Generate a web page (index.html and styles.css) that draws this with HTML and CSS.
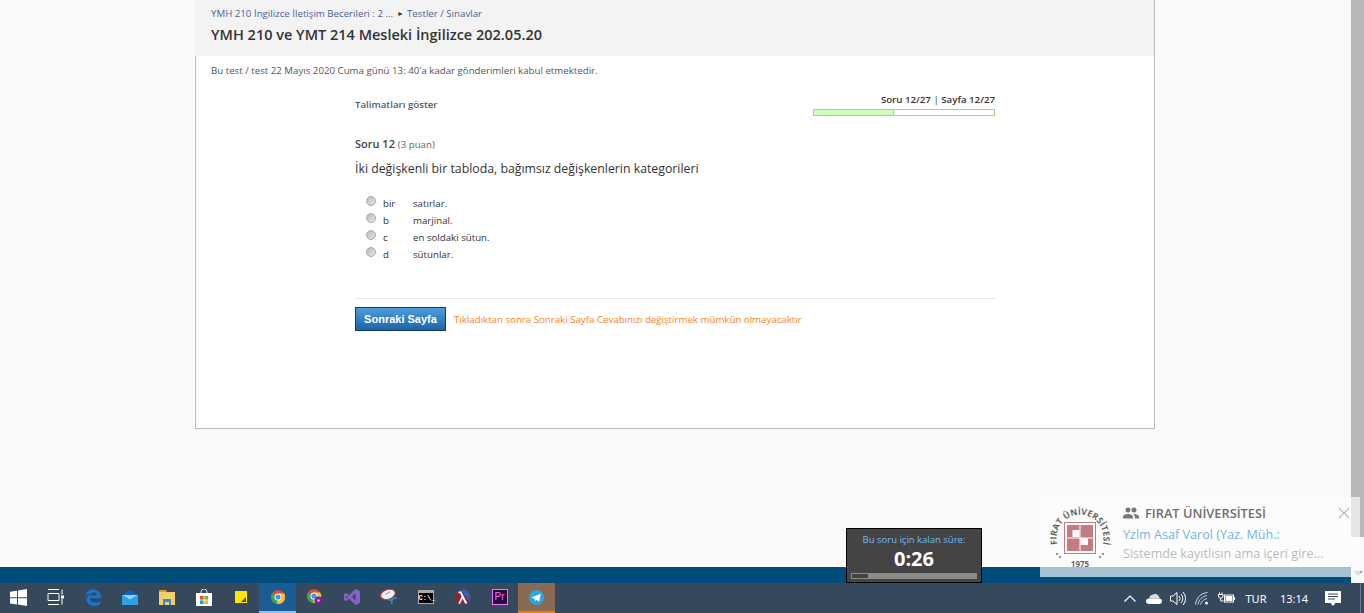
FILE: index.html
```html
<!DOCTYPE html>
<html lang="tr">
<head>
    <meta charset="UTF-8">
    <title>YMH 210 ve YMT 214 Mesleki İngilizce 202.05.20</title>
    <link rel="stylesheet" href="styles.css">
</head>
<body>
    <div class="browser">
        <div class="viewport">
            <div class="page">
                <div class="card">
                    <div class="card-head">
                        <div class="crumbs"><a href="#">YMH 210 İngilizce İletişim Becerileri : 2 ...</a><span class="crumb-sep">&#9658;</span><a href="#">Testler / Sınavlar</a></div>
                        <h1>YMH 210 ve YMT 214 Mesleki İngilizce 202.05.20</h1>
                    </div>
                    <div class="card-body">
                        <p class="deadline">Bu test / test 22 Mayıs 2020 Cuma günü 13: 40'a kadar gönderimleri kabul etmektedir.</p>
                        <div class="quiz">
                            <div class="quiz-top">
                                <a class="show-help" href="#">Talimatları göster</a>
                                <div class="progress-box">
                                    <div class="progress-text">Soru 12/27 <span class="pipe">|</span> Sayfa 12/27</div>
                                    <div class="progress-bar"><div class="progress-fill" style="width: 44.5%"></div></div>
                                </div>
                            </div>
                            <div class="q-title">Soru 12 <span class="q-points">(3 puan)</span></div>
                            <p class="q-text">İki değişkenli bir tabloda, bağımsız değişkenlerin kategorileri</p>
                            <ul class="options">
                                <li><span class="radio"></span><span class="opt-key">bir</span><span>satırlar.</span></li>
                                <li><span class="radio"></span><span class="opt-key">b</span><span>marjinal.</span></li>
                                <li><span class="radio"></span><span class="opt-key">c</span><span>en soldaki sütun.</span></li>
                                <li><span class="radio"></span><span class="opt-key">d</span><span>sütunlar.</span></li>
                            </ul>
                            <div class="quiz-actions">
                                <button class="next-btn">Sonraki Sayfa</button>
                                <span class="next-note">Tıkladıktan sonra Sonraki Sayfa Cevabınızı değiştirmek mümkün olmayacaktır</span>
                            </div>
                        </div>
                    </div>
                </div>
            </div>
            <div class="footer-band"></div>
        </div>
        <div class="scrollbar">
            <div class="scroll-thumb"></div>
            <div class="scroll-track"><span class="scroll-arrow"></span></div>
        </div>
    </div>

    <div class="timer">
        <div class="timer-label">Bu soru için kalan süre:</div>
        <div class="timer-value">0:26</div>
        <div class="timer-bar"><div class="timer-fill" style="width: 13%"></div></div>
    </div>

    <div class="toast">
        <svg class="toast-logo" width="70" height="72" viewBox="0 0 70 72">
            <defs>
                <path id="logoArc" d="M10.500 43 A23.500 23.500 0 1 1 55.500 43"/>
            </defs>
            <text class="logo-ring"><textPath href="#logoArc" startOffset="50%" text-anchor="middle">FIRAT ÜNİVERSİTESİ</textPath></text>
            <text class="logo-year" x="33" y="65" text-anchor="middle">1975</text>
            <circle cx="10" cy="52" r="1" fill="#222"/>
            <circle cx="13" cy="55" r="1" fill="#222"/>
            <circle cx="56" cy="52" r="1" fill="#222"/>
            <circle cx="53" cy="55" r="1" fill="#222"/>
            <rect x="17.500" y="20.500" width="31" height="31" fill="#fff" stroke="#a83a46"/>
            <rect x="20" y="23" width="26" height="26" fill="#a83a46"/>
            <path d="M33 23v26M20 36h26" stroke="#fff"/>
            <rect x="25.500" y="28" width="7" height="7" fill="#fff"/>
            <rect x="33.500" y="36" width="7.500" height="7" fill="#fff"/>
        </svg>
        <div class="toast-main">
            <div class="toast-site">
                <svg width="16" height="12" viewBox="0 0 16 12"><path d="M5 5.500a2.400 2.400 0 1 0 0-5 2.400 2.400 0 0 0 0 5zm6 0a2.400 2.400 0 1 0 0-5 2.400 2.400 0 0 0 0 5zM5 7c-2 0-5 1-5 2.800V11.500h10V9.800C10 8 7 7 5 7zm6 0c-.3 0-.6 0-.9.1 1 .7 1.700 1.600 1.700 2.700v1.700H16V9.800C16 8 13 7 11 7z" fill="#333"/></svg>
                <span>FIRAT ÜNİVERSİTESİ</span>
            </div>
            <div class="toast-from">Yzlm Asaf Varol (Yaz. Müh.:</div>
            <div class="toast-msg">Sistemde kayıtlısın ama içeri gire...</div>
        </div>
        <svg class="toast-close" width="12" height="12" viewBox="0 0 12 12"><path d="M1 1l10 10M11 1L1 11" stroke="#999" stroke-width="1.200"/></svg>
    </div>

    <div class="taskbar">
        <div class="task-icons">
            <div class="task-item">
                <svg width="17" height="17" viewBox="0 0 17 17"><path d="M0 2.700l7-1v6.500H0zM8 1.500L17 0v8.200H8zM0 9.200h7v6.200l-7-1zM8 9.200h9V17l-9-1.400z" fill="#fff"/></svg>
            </div>
            <div class="task-item">
                <svg width="17" height="16" viewBox="0 0 17 16" fill="none" stroke="#fff"><path d="M1 .5h11M3 4.500h9v7H1v-7zM1 15.500h11M15 .5v5M15 10v5.500"/><rect x="14" y="6.500" width="3" height="3" fill="#fff" stroke="none"/></svg>
            </div>
            <div class="task-item">
                <svg width="17" height="17" viewBox="0 0 17 17"><path d="M1 7.500C2 2.800 5.500.3 9 .3c4.800 0 8 3.500 8 9H6c.1 2.800 2.300 4.300 5 4.300 2 0 3.800-.6 5-1.300v3.300c-1.400.9-3.400 1.400-5.700 1.400C5.500 17 2.500 14 2.500 10.500c0-2.800 1.800-4.800 3.800-5.700C4 5 2 6 1 7.500zm5.200-1h6.600c0-1.800-1.300-3-3.100-3-1.800 0-3.200 1.200-3.500 3z" fill="#0f78d4"/></svg>
            </div>
            <div class="task-item">
                <svg width="16" height="15" viewBox="0 0 16 15"><path d="M8 0l8 5H0z" fill="#0a64b4"/><path d="M0 5h16L8 10z" fill="#8fd0f5"/><path d="M0 5v10h16V5L8 10z" fill="#27a3e6"/></svg>
            </div>
            <div class="task-item">
                <svg width="16" height="15" viewBox="0 0 16 15"><path d="M0 0h7l1 2H0z" fill="#d99a1c"/><path d="M0 2h16v13H0z" fill="#f5cf6b"/><path d="M4 9h8v6h-2v-3H6v3H4z" fill="#2b8fd6"/></svg>
            </div>
            <div class="task-item">
                <svg width="16" height="17" viewBox="0 0 16 17"><path d="M5 5V3a3 3 0 0 1 6 0v2" fill="none" stroke="#ddd"/><path d="M0 4h16v13H0z" fill="#fff"/><path d="M4 7h3.600v3.600H4z" fill="#e2502a"/><path d="M8.400 7H12v3.600H8.400z" fill="#7cb82f"/><path d="M4 11.400h3.600V15H4z" fill="#0aa1e6"/><path d="M8.400 11.400H12V15H8.400z" fill="#f5b800"/></svg>
            </div>
            <div class="task-item">
                <svg width="12" height="12" viewBox="0 0 12 12"><path d="M0 0h12v12H0z" fill="#ffe600"/><path d="M6 11l5-5v5z" fill="#4a4a3a"/></svg>
            </div>
            <div class="task-item is-active">
                <svg width="14" height="14" viewBox="0 0 14 14"><circle cx="7" cy="7" r="7" fill="#dd4b39"/><path d="M7 7L1 3.500A7 7 0 0 0 6 14z" fill="#3aa757"/><path d="M7 3.500h6.200A7 7 0 0 1 6 14z" fill="#fbc02d"/><circle cx="7" cy="7" r="3.500" fill="#fff"/><circle cx="7" cy="7" r="2.600" fill="#4b8ff0"/></svg>
            </div>
            <div class="task-item">
                <svg width="16" height="16" viewBox="0 0 16 16"><circle cx="7" cy="7" r="7" fill="#dd4b39"/><path d="M7 7L1 3.500A7 7 0 0 0 6 14z" fill="#3aa757"/><path d="M7 3.500h6.200A7 7 0 0 1 6 14z" fill="#fbc02d"/><circle cx="7" cy="7" r="3.500" fill="#fff"/><circle cx="7" cy="7" r="2.600" fill="#4b8ff0"/><circle cx="11.500" cy="11.500" r="4" fill="#7b1fa2"/><circle cx="11.500" cy="11.500" r="1.200" fill="#e1bee7"/></svg>
            </div>
            <div class="task-item">
                <svg width="16" height="16" viewBox="0 0 16 16"><path d="M11.500 0L16 2v12l-4.500 2L5 9.800 2 12.200 0 11V5l2-1.200 3 2.400zM11.500 4.500L8 8l3.500 3.500zM2 6.300v3.400L3.600 8z" fill="#8661c5"/></svg>
            </div>
            <div class="task-item">
                <svg width="18" height="16" viewBox="0 0 16 15"><ellipse cx="7" cy="5" rx="7" ry="4.500" transform="rotate(-18 7 5)" fill="#eee" stroke="#c8383c"/><path d="M5 5l4-2.500" stroke="#999"/><path d="M7 9.500c2 1.500 4 1 5-.3 1-1 3-1 3.500-.3" fill="none" stroke="#2b8fd6" stroke-width="1.300"/><path d="M11 9l-.5 5" stroke="#2b8fd6" stroke-width="1.300"/></svg>
            </div>
            <div class="task-item">
                <div class="cmd-icon"><span>C:\_</span></div>
            </div>
            <div class="task-item">
                <svg width="16" height="16" viewBox="0 0 16 16"><circle cx="8" cy="8" r="7.500" fill="#3c5caa"/><path d="M.5 8a7.500 7.500 0 0 0 4 6.600L8 8 5 2A7.500 7.500 0 0 0 .5 8zM6 15.200A7.500 7.500 0 0 0 14 12.500L9.500 7z" fill="#9f1d20"/><path d="M3.500 2.500h2.600L12.500 14.500h-2.400L7.600 9.400 4.600 15 3.400 14.200 6.600 7.400 5 4.300H3.500z" fill="#fff"/></svg>
            </div>
            <div class="task-item">
                <div class="pr-icon">Pr</div>
            </div>
            <div class="task-item is-flagged">
                <svg width="15" height="15" viewBox="0 0 15 15"><circle cx="7.500" cy="7.500" r="7.500" fill="#2ca5e0"/><path d="M3 7.300l8-3.200c.4-.1.700.1.600.6L10.300 11c-.1.400-.4.500-.8.300L7.500 9.800l-1 1c-.2.200-.4.200-.5-.1l-.7-2.300L3 7.800c-.4-.1-.4-.4 0-.5z" fill="#fff"/></svg>
            </div>
        </div>
        <div class="tray">
            <div class="tray-item">
                <svg width="12" height="7" viewBox="0 0 12 7"><path d="M.5 6.500L6 1l5.500 5.500" fill="none" stroke="#fff" stroke-width="1.100"/></svg>
            </div>
            <div class="tray-item">
                <svg width="16" height="11" viewBox="0 0 16 11"><path d="M3.500 5.500A3 3 0 0 1 6 2a4.500 4.500 0 0 1 7 1.500 3 3 0 0 1 .5 2z" fill="#d8dde2"/><path d="M3.500 5.500h10a2.800 2.800 0 0 1 2.500 2.800c0 1.500-1.200 2.700-2.700 2.700H3a3 3 0 0 1-3-2.800 2.800 2.800 0 0 1 3.500-2.700z" fill="#fff"/></svg>
            </div>
            <div class="tray-item">
                <svg width="16" height="15" viewBox="0 0 16 15" fill="none" stroke="#fff"><path d="M.5 5v5h2.500l4 3.500V1.500L3 5z"/><path d="M9 5a3.500 3.500 0 0 1 0 5M11 3a6.500 6.500 0 0 1 0 9M13 1a9.500 9.500 0 0 1 0 13"/></svg>
            </div>
            <div class="tray-item">
                <svg width="14" height="13" viewBox="0 0 14 13" fill="none" stroke="#cfd6dc"><path d="M.5 12.500C1 6 6 1 12.500.5M3 12.500C3.500 8 7.500 4 12 3.500M5.500 12.500C6 10 9 7 12 6.500"/><circle cx="11.500" cy="11" r="1.500" fill="#fff" stroke="none"/></svg>
            </div>
            <div class="tray-item">
                <svg width="17" height="12" viewBox="0 0 17 12" fill="none" stroke="#fff"><path d="M1.500 .5v2M4 .5v2M.5 2.500h4.500V4a2.200 2.200 0 0 1-4.500 0zM2.700 6.200v2.800h3"/><rect x="6.500" y="3" width="9" height="7"/><rect x="7.500" y="4" width="7" height="5" fill="#fff" stroke="none"/><path d="M16.500 5v3"/></svg>
            </div>
            <div class="tray-text tray-lang">TUR</div>
            <div class="tray-text tray-clock">13:14</div>
            <div class="tray-item tray-notif">
                <svg width="16" height="15" viewBox="0 0 16 15"><path d="M0 0h16v12h-5.500L8 15l-2.500-3H0z" fill="#fff"/><path d="M3 3h10M3 5.500h10M3 8h7" stroke="#36495c"/></svg>
            </div>
            <div class="show-desktop"></div>
        </div>
    </div>
</body>
</html>
```

FILE: styles.css
```css
* {
    box-sizing: border-box;
}

html, body {
    margin: 0;
    padding: 0;
    height: 100%;
    overflow: hidden;
}

body {
    display: flex;
    flex-direction: column;
    background-color: #faf9f7;
    font-family: 'Open Sans', sans-serif;
    color: #333;
    position: relative;
}

a {
    text-decoration: none;
}

.browser {
    display: flex;
    height: 583px;
}

.viewport {
    flex: 1;
    display: flex;
    flex-direction: column;
}

.page {
    flex: 1;
    padding-left: 195px;
}

.card {
    width: 960px;
    height: 429px;
    display: flex;
    flex-direction: column;
    background-color: #fff;
    border-right: 1px solid #bdbdbd;
    border-bottom: 1px solid #bdbdbd;
}

.card-head {
    height: 56px;
    padding: 7px 16px 0;
    background-color: #f3f3f3;
}

.crumbs {
    font-size: 9.700px;
    line-height: 13px;
    color: #555;
}

.crumbs a {
    color: #4f5f96;
}

.crumb-sep {
    font-size: 7px;
    margin: 0 3px 0 4px;
    color: #333;
    vertical-align: 1px;
}

h1 {
    margin: 5px 0 0;
    font-size: 14.500px;
    line-height: 20px;
    font-weight: 600;
    color: #333;
}

.card-body {
    flex: 1;
    padding: 8px 16px 0 15px;
    border-left: 1px solid #bdbdbd;
}

.deadline {
    margin: 0;
    font-size: 9.700px;
    line-height: 14px;
    color: #555;
}

.quiz {
    width: 640px;
    margin: 14px 0 0 144px;
}

.quiz-top {
    display: flex;
    justify-content: space-between;
    align-items: flex-start;
    height: 38px;
}

.show-help {
    margin-top: 6px;
    font-size: 9.700px;
    line-height: 14px;
    font-weight: 600;
    color: #4d5d70;
}

.progress-box {
    width: 182px;
    padding-top: 1px;
}

.progress-text {
    font-size: 9.700px;
    line-height: 14px;
    font-weight: 600;
    text-align: right;
    color: #333;
}

.pipe {
    color: #4f6f96;
}

.progress-bar {
    height: 7px;
    margin-top: 2px;
    border: 1px solid #99dd80;
    background-color: #fff;
}

.progress-fill {
    height: 100%;
    background-color: #ccffbb;
    border-right: 1px solid #99dd80;
}

.q-title {
    margin-top: 6px;
    font-size: 11px;
    line-height: 15px;
    font-weight: 600;
    color: #444;
}

.q-points {
    font-size: 9.700px;
    font-weight: 400;
    color: #666;
}

.q-text {
    margin: 8px 0 0;
    font-size: 12.300px;
    line-height: 17px;
    color: #333;
}

.options {
    list-style: none;
    margin: 18px 0 0;
    padding: 0 0 0 11px;
}

.options li {
    display: flex;
    align-items: center;
    height: 17px;
    font-size: 9.700px;
    color: #333;
}

.radio {
    width: 10px;
    height: 10px;
    margin: -5px 7px 0 0;
    border-radius: 50%;
    border: 1px solid #a9a9a9;
    background: linear-gradient(135deg, #bbb, #e6e6e6);
}

.opt-key {
    width: 30px;
}

.quiz-actions {
    display: flex;
    align-items: center;
    gap: 8px;
    margin-top: 35px;
    padding-top: 8px;
    border-top: 1px solid #e6e6e6;
}

.next-btn {
    width: 91px;
    height: 24px;
    padding: 0;
    border: 1px solid #123c64;
    background: linear-gradient(#4f9ddd, #1f63a6);
    color: #fff;
    font-family: 'Liberation Sans', sans-serif;
    font-size: 11px;
    font-weight: bold;
}

.next-note {
    font-size: 9.700px;
    color: #f5842a;
}

.footer-band {
    height: 16px;
    background-color: #004d7c;
}

.scrollbar {
    width: 13px;
    display: flex;
    flex-direction: column;
    background-color: #f9f9f9;
}

.scroll-thumb {
    height: 537px;
    background-color: #b8b8b8;
}

.scroll-track {
    flex: 1;
    display: flex;
    align-items: flex-end;
    justify-content: center;
    padding-bottom: 7px;
}

.scroll-arrow {
    width: 0;
    height: 0;
    border-left: 5px solid transparent;
    border-right: 5px solid transparent;
    border-top: 5px solid #a3a3a3;
}

.timer {
    position: absolute;
    left: 846px;
    top: 528px;
    width: 136px;
    height: 55px;
    padding: 5px 4px 0;
    border: 1px solid #000;
    background-color: #444;
    text-align: center;
}

.timer-label {
    font-size: 9.500px;
    line-height: 12px;
    color: #71bdf5;
}

.timer-value {
    font-size: 20px;
    line-height: 26px;
    font-weight: 700;
    color: #fff;
}

.timer-bar {
    height: 6px;
    margin-top: 1px;
    background-color: #8b8b8b;
    padding: 1px;
}

.timer-fill {
    height: 100%;
    background-color: #444;
}

.toast {
    position: absolute;
    left: 1040px;
    top: 497px;
    width: 320px;
    height: 80px;
    display: flex;
    padding: 5px 0 0 7px;
    background-color: #fff;
    opacity: .65;
}

.toast-logo {
    flex: none;
}

.logo-ring {
    font-family: 'Open Sans', sans-serif;
    font-size: 8.800px;
    font-weight: 700;
    fill: #111;
}

.logo-year {
    font-family: 'Open Sans', sans-serif;
    font-size: 8px;
    font-weight: 700;
    fill: #111;
}

.toast-main {
    margin-left: 6px;
    width: 214px;
}

.toast-site {
    display: flex;
    align-items: center;
    gap: 6px;
    margin-top: 3px;
    font-size: 12.800px;
    line-height: 16px;
    font-weight: 600;
    color: #222;
}

.toast-from {
    margin-top: 5px;
    font-size: 12.600px;
    line-height: 17px;
    color: #2b8fd6;
}

.toast-msg {
    margin-top: 1px;
    font-size: 12.600px;
    line-height: 20px;
    color: #999;
}

.toast-close {
    margin: 5px 0 0 1px;
}

.taskbar {
    flex: 1;
    display: flex;
    justify-content: space-between;
    background-color: #36495c;
}

.task-icons {
    display: flex;
}

.task-item {
    width: 37px;
    display: flex;
    align-items: center;
    justify-content: center;
    border-bottom: 2px solid transparent;
}

.task-item.is-active {
    background-color: #1b5c94;
    border-bottom-color: #8fc3ee;
}

.task-item.is-flagged {
    background-color: #8a6a52;
    border-bottom-color: #f57c00;
}

.cmd-icon {
    width: 16px;
    height: 14px;
    padding-top: 3px;
    background-color: #000;
    border: 1px solid #aaa;
    border-top-width: 3px;
    font-family: 'Liberation Mono', monospace;
    font-size: 7px;
    line-height: 8px;
    font-weight: bold;
    color: #fff;
    text-align: center;
}

.cmd-icon span {
    display: block;
    margin-top: -2px;
}

.pr-icon {
    width: 16px;
    height: 16px;
    border: 1px solid #ea77ff;
    background-color: #2a0a3a;
    font-family: 'Liberation Sans', sans-serif;
    font-size: 10px;
    line-height: 14px;
    color: #ea77ff;
    text-align: center;
}

.tray {
    display: flex;
    align-items: stretch;
}

.tray-item {
    width: 24px;
    display: flex;
    align-items: center;
    justify-content: center;
}

.tray-text {
    display: flex;
    align-items: center;
    justify-content: center;
    font-family: 'Noto Sans', sans-serif;
    font-size: 11px;
    color: #fff;
}

.tray-lang {
    width: 36px;
}

.tray-clock {
    width: 40px;
}

.tray-item.tray-notif {
    width: 38px;
}

.show-desktop {
    width: 12px;
}

.show-desktop::after {
    content: "";
    display: block;
    width: 1px;
    height: 100%;
    margin-left: 8px;
    background-color: #6b7a88;
}
```
